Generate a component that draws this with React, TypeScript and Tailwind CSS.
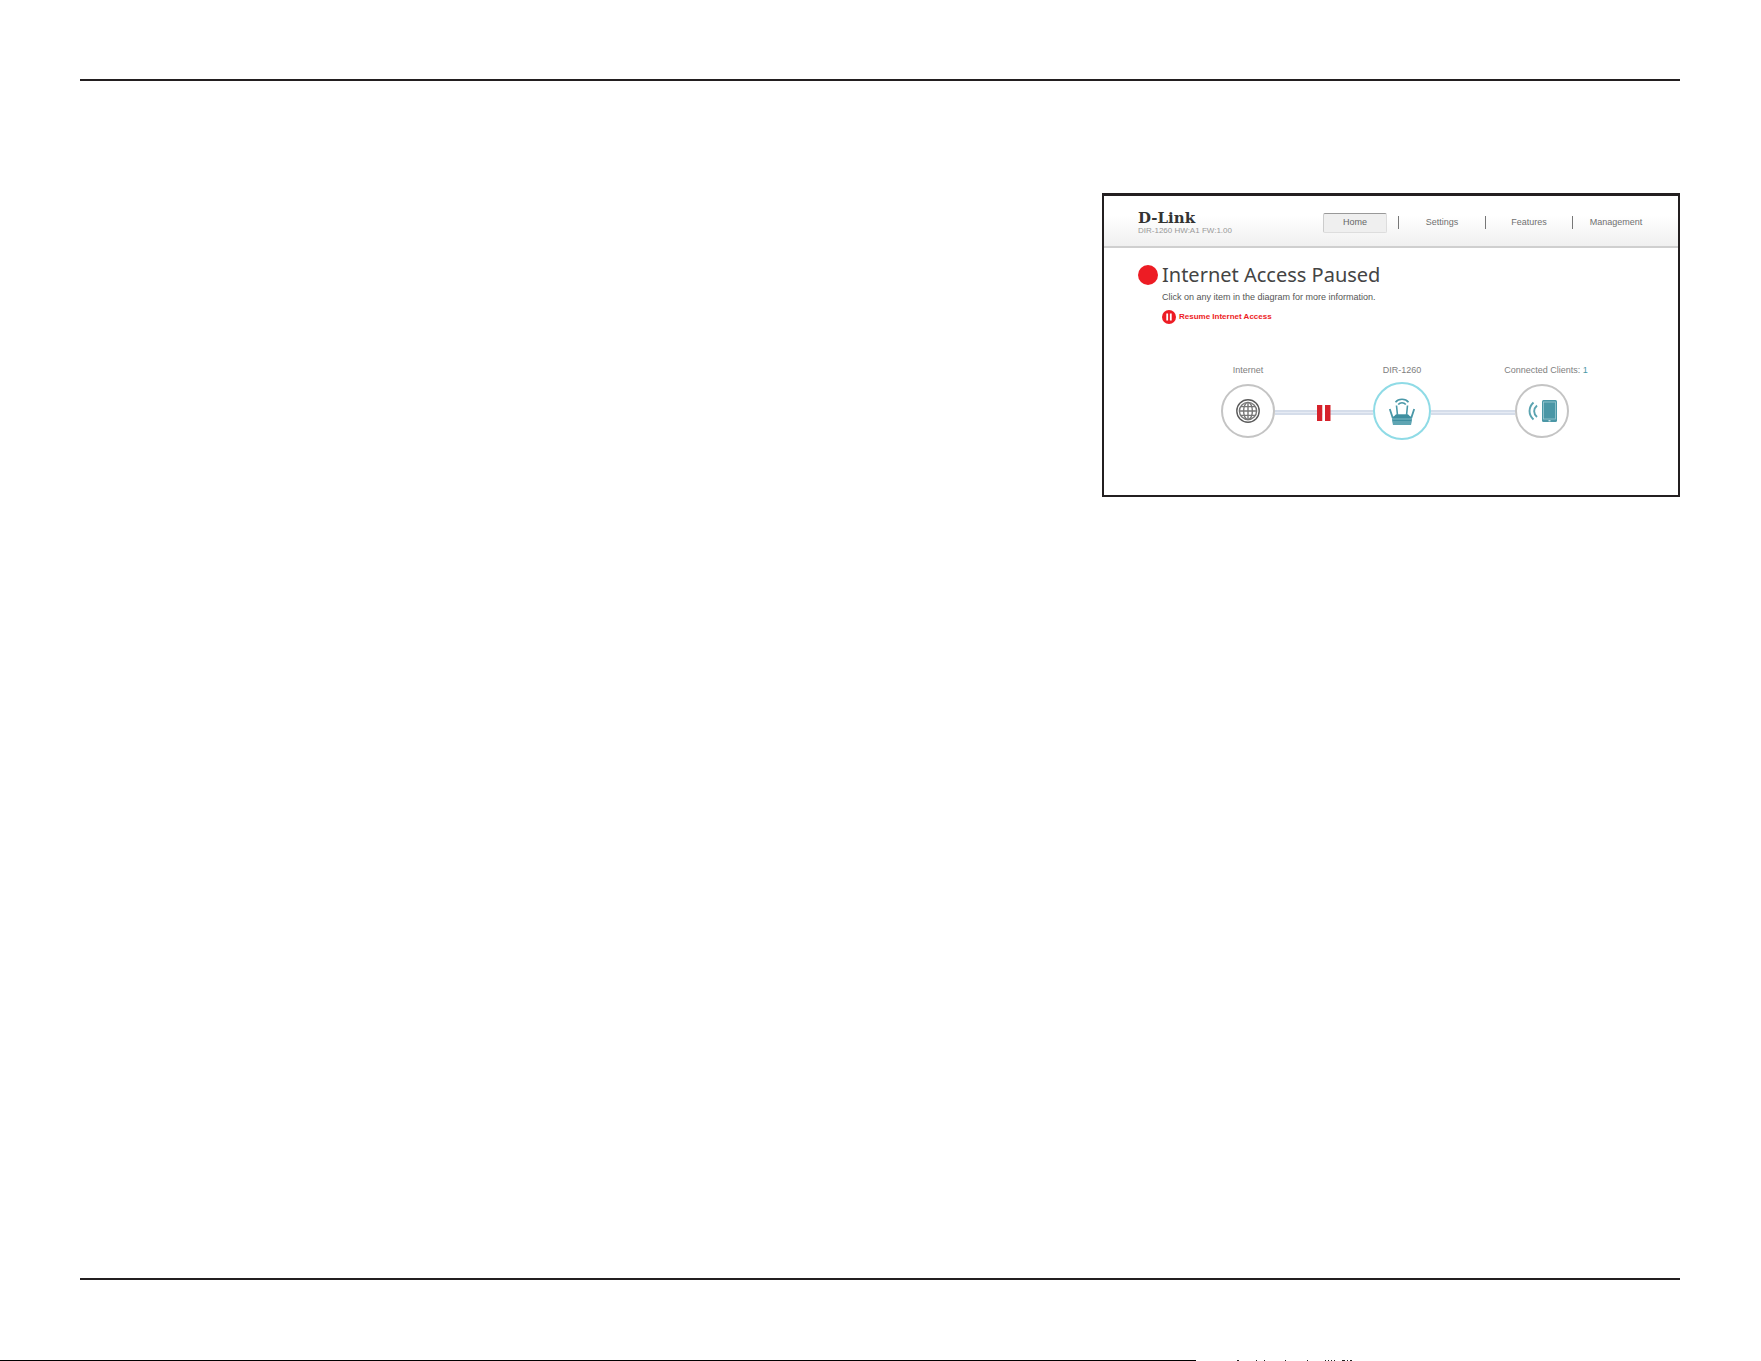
import React, { useState } from "react";

const tabs = ["Home", "Settings", "Features", "Management"];

const GlobeIcon = () => (
  <svg width="24" height="24" viewBox="0 0 24 24" fill="none" stroke="#777" aria-hidden="true">
    <circle cx="12" cy="12" r="11.2" stroke="#5c5c5c" strokeWidth="1.4" />
    <circle cx="12" cy="12" r="8.6" strokeWidth="1.4" />
    <ellipse cx="12" cy="12" rx="4.4" ry="8.6" strokeWidth="1.4" />
    <path d="M12 3.4v17.2M3.4 12h17.2M4.8 7.6h14.4M4.8 16.4h14.4" strokeWidth="1.4" />
  </svg>
);

const RouterIcon = () => (
  <svg width="26" height="27" viewBox="0 0 26 27" className="shrink-0" fill="none" stroke="#4a98a8" aria-hidden="true">
    <path d="M6.5 4.2C9.5 .2 16.5 .2 19.5 4.2" strokeWidth="1.6" />
    <path d="M9.2 6.6c2-2.4 5.6-2.4 7.6 0" strokeWidth="1.6" />
    <path d="M7.5 7.5l1 10M18.5 7.5l-1 10" strokeWidth="1.6" />
    <path d="M.8 11l2.8 8.5h2M25.2 11l-2.8 8.5h-2" strokeWidth="1.8" />
    <path d="M7 16.5h12l4 4v2l-1 4.5H4l-1-4.5v-2z" fill="#5fa5b3" stroke="none" />
    <path d="M7 16.5h12l3.5 3.5h-19z" fill="#3f8fa0" stroke="none" />
    <path d="M4 22.5h18" stroke="#3f8fa0" strokeWidth="1" />
  </svg>
);

const ClientIcon = () => (
  <svg width="29" height="22" viewBox="0 0 29 22" className="shrink-0" fill="none" stroke="#5aa3b0" aria-hidden="true">
    <path d="M5.5 2.5C.2 7.500 .2 14.500 5.5 19.5" strokeWidth="1.9" />
    <path d="M9 5.5C5.2 9 5.2 13.5 9 17" strokeWidth="1.9" />
    <rect x="14" y="0" width="15" height="22" rx="1.5" fill="#4b97a6" stroke="none" />
    <rect x="15.5" y="2" width="12" height="17" stroke="#9fcbd3" strokeWidth=".8" />
    <path d="M20.5 20.8h2" stroke="#fff" strokeWidth="1" />
  </svg>
);

const App: React.FC = () => {
  const [active, setActive] = useState("Home");

  return (
    <div className="flex min-h-screen flex-col bg-white font-['Liberation_Sans',Arial,sans-serif]">
      <main className="mt-[79px] mr-[81px] mb-20 ml-20 flex flex-1 flex-col border-y-2 border-[#231f20] pt-28">
        <section className="ml-auto w-full max-w-[578px] border-2 border-t-3 border-[#231f20] pb-[55px]">
          <header className="flex items-center justify-between border-b-2 border-[#cfcfcf] bg-linear-to-b from-white from-40% to-[#f0f0f0] pt-[14px] pr-[30px] pb-[11px] pl-[34px]">
            <div className="flex flex-col">
              <span className="font-['DejaVu_Serif','Liberation_Serif',serif] text-[15px] leading-[16px] font-bold text-[#333]">
                D-Link
              </span>
              <span className="text-[8px] leading-[9px] text-[#999]">DIR-1260 HW:A1 FW:1.00</span>
            </div>
            <nav className="flex items-center gap-[11px]">
              {tabs.map((tab, i) => (
                <React.Fragment key={tab}>
                  {i > 0 && <span className="h-[13px] w-px bg-[#777]" />}
                  <button
                    onClick={() => setActive(tab)}
                    className={
                      active === tab
                        ? "flex h-5 w-16 items-center justify-center rounded-xs border border-t-[#999] border-r-[#ddd] border-b-[#ddd] border-l-[#ccc] bg-[#efefef] text-[9px] text-[#666]"
                        : "flex h-5 w-16 items-center justify-center text-[9px] text-[#707070]"
                    }
                  >
                    {tab}
                  </button>
                </React.Fragment>
              ))}
            </nav>
          </header>

          <div className="flex gap-1 pt-[13px] pl-[34px]">
            <span className="mt-1 size-5 rounded-full bg-[#ed1c24]" />
            <div>
              <h1 className="font-['Noto_Sans',sans-serif] text-[20px] leading-[28px] text-[#444]">
                Internet Access Paused
              </h1>
              <p className="mt-[2px] text-[9px] leading-[12px] text-[#555]">
                Click on any item in the diagram for more information.
              </p>
              <button className="mt-[7px] flex items-center gap-[3px] text-[8px] leading-[14px] font-bold text-[#ed1c24]">
                <svg width="14" height="14" viewBox="0 0 14 14" aria-hidden="true">
                  <circle cx="7" cy="7" r="7" fill="#ed1c24" />
                  <path d="M5.2 3.5v7M8.8 3.5v7" stroke="#fff" strokeWidth="1.8" />
                </svg>
                Resume Internet Access
              </button>
            </div>
          </div>

          <div className="mt-10 flex pr-[109px] pl-[117px] text-[9px] leading-[12px] text-[#808080]">
            <div className="flex w-[54px] flex-col items-center gap-2 whitespace-nowrap">
              Internet
              <button aria-label="Internet" className="flex size-[54px] items-center justify-center rounded-full border-2 border-[#c4c4c4] bg-white">
                <GlobeIcon />
              </button>
            </div>
            <div className="mt-[46px] flex h-[5px] flex-7 items-center justify-center border-y-2 border-[#d5ddea] bg-[#e6ebf4]">
              <svg width="14" height="16" viewBox="0 0 14 16" className="shrink-0" aria-hidden="true">
                <path d="M0 0h5.5v16H0zM8 0h5.5v16H8z" fill="#d6222b" />
                <path d="M5.5 0H8v16H5.5z" fill="#fff" />
              </svg>
            </div>
            <div className="flex w-[58px] flex-col items-center gap-[6px] whitespace-nowrap">
              DIR-1260
              <button aria-label="DIR-1260" className="flex size-[58px] items-center justify-center rounded-full border-2 border-[#8fdbe6] bg-white">
                <RouterIcon />
              </button>
            </div>
            <div className="mt-[46px] h-[5px] flex-6 border-y-2 border-[#d5ddea] bg-[#e6ebf4]" />
            <div className="flex w-[54px] flex-col items-center gap-2 whitespace-nowrap">
              <span className="pl-2">
                Connected Clients: <span className="text-[#4b97a6]">1</span>
              </span>
              <button aria-label="Connected Clients" className="flex size-[54px] items-center justify-center rounded-full border-2 border-[#c4c4c4] bg-white">
                <ClientIcon />
              </button>
            </div>
          </div>
        </section>
      </main>

      <footer className="flex h-px">
        <div className="w-[67.9%] bg-black" />
        <svg width="160" height="1" viewBox="0 0 160 1" aria-hidden="true">
          <path d="M41 0h2v1h-2zM60 0h1v1h-1zM68 0h1v1h-1zM89 0h1v1h-1zM111 0h1v1h-1zM129 0h1v1h-1zM132 0h1v1h-1zM135 0h1v1h-1zM138 0h1v1h-1zM146 0h3v1h-3zM151 0h1v1h-1zM154 0h2v1h-2z" fill="#222" />
        </svg>
      </footer>
    </div>
  );
};

export default App;
